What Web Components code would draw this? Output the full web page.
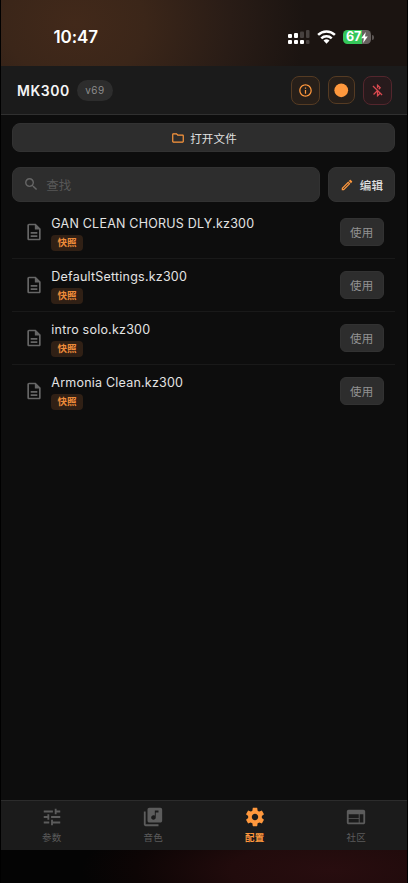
<!DOCTYPE html>
<html lang="zh-CN">
<head>
<meta charset="utf-8">
<title>MK300</title>
<style>
html, body { margin: 0; background: #000; }
body { font-family: Inter, "Noto Sans CJK SC", sans-serif; color: #e4e4e4; }
</style>
</head>
<body>
<mk-app></mk-app>
<script>
const define = (name, html) => {
  const t = document.createElement('template');
  t.innerHTML = html;
  customElements.define(name, class extends HTMLElement {
    constructor() {
      super();
      this.attachShadow({ mode: 'open' }).appendChild(t.content.cloneNode(true));
    }
  });
};

const ICONS = {
  info: 'M11 7h2v2h-2zm0 4h2v6h-2zm1-9C6.480 2 2 6.480 2 12s4.480 10 10 10 10-4.480 10-10S17.520 2 12 2zm0 18c-4.410 0-8-3.590-8-8s3.590-8 8-8 8 3.590 8 8-3.590 8-8 8z',
  dot: 'M12 2a10 10 0 1 0 0 20 10 10 0 0 0 0-20z',
  btoff: 'M13 5.830l1.880 1.880-1.600 1.600 1.410 1.410 3.020-3.020L12 2h-1v5.030l2 2v-3.200zM5.410 4L4 5.410 10.590 12 5 17.590 6.410 19 11 14.410V22h1l4.290-4.290 2.300 2.290L20 18.590 5.410 4zM13 18.170v-3.760l1.880 1.880L13 18.170z',
  folder: 'M9.170 6l2 2H20v10H4V6h5.170M10 4H4c-1.100 0-1.990.9-1.990 2L2 18c0 1.100.9 2 2 2h16c1.100 0 2-.9 2-2V8c0-1.100-.9-2-2-2h-8l-2-2z',
  search: 'M15.500 14h-.79l-.28-.27A6.471 6.471 0 0 0 16 9.500 6.500 6.500 0 1 0 9.500 16c1.610 0 3.090-.59 4.230-1.570l.27.28v.79l5 4.990L20.490 19l-4.990-5zm-6 0C7.010 14 5 11.990 5 9.500S7.010 5 9.500 5 14 7.010 14 9.500 11.990 14 9.500 14z',
  edit: 'M14.060 9.020l.92.92L5.920 19H5v-.92l9.060-9.060M17.660 3c-.25 0-.51.1-.7.290l-1.830 1.830 3.750 3.750 1.830-1.830c.39-.39.39-1.020 0-1.410l-2.340-2.340c-.2-.2-.45-.29-.71-.29zm-3.600 3.190L3 17.250V21h3.750L17.810 9.940l-3.750-3.750z',
  file: 'M8 16h8v2H8zm0-4h8v2H8zm6-10H6c-1.100 0-2 .9-2 2v16c0 1.100.89 2 1.990 2H18c1.100 0 2-.9 2-2V8l-6-6zm4 18H6V4h7v5h5v11z',
  tune: 'M3 17v2h6v-2H3zM3 5v2h10V5H3zm10 16v-2h8v-2h-8v-2h-2v6h2zM7 9v2H3v2h4v2h2V9H7zm14 4v-2H11v2h10zm-6-4h2V7h4V5h-4V3h-2v6z',
  music: 'M20 2H8c-1.100 0-2 .9-2 2v12c0 1.100.9 2 2 2h12c1.100 0 2-.9 2-2V4c0-1.100-.9-2-2-2zm-2 5h-3v5.500c0 1.380-1.120 2.500-2.500 2.500S10 13.880 10 12.500s1.120-2.500 2.500-2.500c.57 0 1.080.19 1.500.51V5h4v2zM4 6H2v14c0 1.100.9 2 2 2h14v-2H4V6z',
  gear: 'M19.430 12.980c.04-.32.07-.64.07-.98s-.03-.66-.07-.98l2.110-1.650c.19-.15.24-.42.12-.64l-2-3.460c-.12-.22-.39-.3-.61-.22l-2.490 1c-.52-.4-1.080-.73-1.690-.98l-.38-2.650C14.460 2.180 14.250 2 14 2h-4c-.25 0-.46.18-.49.42l-.38 2.650c-.61.25-1.170.59-1.690.98l-2.490-1c-.23-.09-.49 0-.61.22l-2 3.460c-.13.22-.07.49.12.64l2.110 1.650c-.04.32-.07.65-.07.98s.03.66.07.98l-2.110 1.650c-.19.15-.24.42-.12.64l2 3.460c.12.22.39.3.61.22l2.490-1c.52.4 1.080.73 1.690.98l.38 2.650c.03.24.24.42.49.42h4c.25 0 .46-.18.49-.42l.38-2.650c.61-.25 1.170-.59 1.690-.98l2.490 1c.23.09.49 0 .61-.22l2-3.460c.12-.22.07-.49-.12-.64l-2.110-1.650zM12 15.500c-1.930 0-3.500-1.570-3.500-3.500s1.570-3.500 3.500-3.500 3.500 1.570 3.500 3.500-1.570 3.500-3.500 3.500z',
  web: 'M20 4H4c-1.100 0-1.990.9-1.990 2L2 18c0 1.100.9 2 2 2h16c1.100 0 2-.9 2-2V6c0-1.100-.9-2-2-2zm-5 14H4v-4h11v4zm0-5H4V9h11v4zm5 5h-4V9h4v9z'
};
customElements.define('mk-icon', class extends HTMLElement {
  connectedCallback() {
    if (this.shadowRoot) return;
    const s = this.getAttribute('size');
    this.attachShadow({ mode: 'open' }).innerHTML =
      `<style>:host{display:block;flex:none;width:${s}px;height:${s}px}svg{display:block;width:100%;height:100%;fill:currentColor}</style>
       <svg viewBox="0 0 24 24"><path d="${ICONS[this.getAttribute('name')]}"/></svg>`;
  }
});

define('mk-status', `
<style>
:host{display:flex;box-sizing:border-box;height:66px;padding:8px 33.500px 0 52.500px;align-items:center;justify-content:space-between;
 background:radial-gradient(ellipse 200px 160px at 74px 24px,#42291a 0%,#3b2619 35%,#291c16 78%,#1b1411 115%)}
.time{font-size:17px;font-weight:600;color:#fff;letter-spacing:-.1px}
.r{display:flex;align-items:center}
svg{display:block}
.sig{margin-right:7px}.wifi{margin-right:7px}
.bat{display:flex;align-items:center;justify-content:center;width:28px;height:14.500px;border-radius:4.500px;
 background:linear-gradient(90deg,#35c759 0 67%,#66605e 67%);color:#fff;font-size:12.500px;font-weight:700;letter-spacing:-.3px;line-height:14px}
.cap{width:1.500px;height:5px;margin-left:1px;border-radius:0 2px 2px 0;background:#5c5654}
</style>
<div class="time">10:47</div>
<div class="r">
<svg class="sig" width="22" height="16" viewBox="0 0 22 16"><g fill="#fff"><rect x="0" y="5" width="4" height="4" rx="1"/><rect x="6" y="4" width="4" height="5" rx="1"/><rect x="0" y="11" width="4" height="4" rx="1"/><rect x="6" y="11" width="4" height="4" rx="1"/><rect x="12" y="11" width="4" height="4" rx="1"/></g><g fill="#47413f"><rect x="12" y="2.500" width="4" height="6.500" rx="1"/><rect x="18" y="1" width="3.500" height="8" rx="1"/><rect x="18" y="11" width="3.500" height="4" rx="1"/></g></svg>
<svg class="wifi" width="19" height="14" viewBox="0 0 19 14"><g fill="none" stroke="#fff" stroke-width="2.500"><path d="M1.100 4.900a12 12 0 0 1 16.800 0"/><path d="M4.300 8.300a7.400 7.400 0 0 1 10.400 0"/></g><path fill="#fff" d="M6.500 10.600a4.300 4.300 0 0 1 6 0L9.500 13.700z"/></svg>
<div class="bat"><span>67</span><svg width="7" height="11" viewBox="0 0 7 11"><path fill="#fff" d="M4.800 0L.2 6.200h2.700L2.100 11l4.700-6.400H4z"/></svg></div><div class="cap"></div>
</div>`);

define('mk-chip-button', `
<style>
:host{display:flex;box-sizing:border-box;width:29px;height:29px;border-radius:8px;align-items:center;justify-content:center;
 border:1px solid #553b23;background:#271f19;color:#ff983d}
:host([small]){width:27px;height:28px}
:host([tone=red]){border-color:#54262d;background:#271a1c;color:#dc4a50}
</style><slot></slot>`);

define('mk-header', `
<style>
:host{display:flex;box-sizing:border-box;height:49px;padding:0 15px 0 16px;align-items:center;background:#1b1b1b;border-bottom:1px solid #303030}
.t{font-size:14px;font-weight:600;color:#f4f4f4;letter-spacing:.5px;width:60px;white-space:nowrap}
.v{box-sizing:border-box;width:36px;height:21px;border-radius:11px;background:#2d2d2d;color:#8c8c8c;font-size:10px;letter-spacing:.5px;line-height:21px;text-align:center}
.r{display:flex;align-items:center;gap:8px;margin-left:auto}
</style>
<div class="t">MK300</div><div class="v">v69</div>
<div class="r">
<mk-chip-button><mk-icon name="info" size="15"></mk-icon></mk-chip-button>
<mk-chip-button small><mk-icon name="dot" size="16.500"></mk-icon></mk-chip-button>
<mk-chip-button tone="red"><mk-icon name="btoff" size="15"></mk-icon></mk-chip-button>
</div>`);

define('mk-button', `
<style>
:host{display:flex;box-sizing:border-box;align-items:center;justify-content:center;gap:5.500px;background:#2d2d2d;border:1px solid #323232;border-radius:8px;
 height:29px;font-size:11.500px;letter-spacing:.2px;color:#e0e0e0}
:host([kind=edit]){width:67.500px;height:35px;font-weight:500;gap:6px}
:host([kind=use]){width:44px;height:28px;border-radius:6px;color:#929292;letter-spacing:.3px;flex:none}
mk-icon{color:#ff983d}
</style><slot name="icon"></slot><slot></slot>`);

define('mk-search', `
<style>
:host{display:flex;box-sizing:border-box;flex:1;height:35px;align-items:center;gap:6.500px;padding-left:10px;background:#2d2d2d;border:1px solid #323232;border-radius:8px;font-size:12.500px;color:#585858}
mk-icon{color:#666}
</style><mk-icon name="search" size="16.500"></mk-icon><slot></slot>`);

define('mk-file-row', `
<style>
:host{display:flex;box-sizing:border-box;height:53.150px;align-items:center;padding:0 11.500px 0 11.300px;border-bottom:1px solid #191919}
:host([last]){border-bottom-color:transparent}
mk-icon{color:#666;margin-right:7.700px}
.m{flex:1;display:flex;flex-direction:column;align-items:flex-start;gap:3px;padding-top:1.500px}
.n{font-size:12.500px;line-height:17px;letter-spacing:.22px;color:#e3e3e3;white-space:nowrap}
.b{box-sizing:border-box;width:31.500px;height:15.500px;border-radius:4px;background:#302015;color:#ed8b3a;font-size:9.500px;font-weight:700;line-height:15.500px;text-align:center}
</style>
<mk-icon name="file" size="20"></mk-icon>
<div class="m"><div class="n"><slot></slot></div><div class="b">快照</div></div>
<mk-button kind="use">使用</mk-button>`);

define('mk-tab', `
<style>
:host{display:flex;flex:1;flex-direction:column;align-items:center;color:#5c5c5c;font-size:9.500px;letter-spacing:.2px;line-height:14px;gap:3px}
:host([active]){color:#ff983d;font-weight:700}
</style><slot name="icon"></slot><div><slot></slot></div>`);

define('mk-tabbar', `
<style>:host{display:flex;box-sizing:border-box;height:50px;padding-top:5px;background:#1b1b1b;border-top:1px solid #2c2c2c}</style>
<mk-tab><mk-icon slot="icon" name="tune" size="22"></mk-icon>参数</mk-tab>
<mk-tab><mk-icon slot="icon" name="music" size="22"></mk-icon>音色</mk-tab>
<mk-tab active><mk-icon slot="icon" name="gear" size="22"></mk-icon>配置</mk-tab>
<mk-tab><mk-icon slot="icon" name="web" size="22"></mk-icon>社区</mk-tab>`);

define('mk-app', `
<style>
:host{display:flex;flex-direction:column;box-sizing:border-box;width:408px;height:883px;padding:0 1px;background:#000;overflow:hidden}
main{flex:1;background:#0d0d0d;padding:8px 11.700px 0 11.300px}
.s{display:flex;gap:7.500px;margin:15px 0 4px}
.o{color:#ff983d}
.home{height:33px;background:radial-gradient(ellipse 250px 70px at 330px 20px,#280d0f 0%,#210b0c 40%,#0d0505 78%,#040404 100%)}
</style>
<mk-status></mk-status>
<mk-header></mk-header>
<main>
<mk-button><mk-icon class="o" slot="icon" name="folder" size="14"></mk-icon>打开文件</mk-button>
<div class="s"><mk-search>查找</mk-search><mk-button kind="edit"><mk-icon class="o" slot="icon" name="edit" size="14"></mk-icon>编辑</mk-button></div>
<mk-file-row>GAN CLEAN CHORUS DLY.kz300</mk-file-row>
<mk-file-row>DefaultSettings.kz300</mk-file-row>
<mk-file-row>intro solo.kz300</mk-file-row>
<mk-file-row last>Armonia Clean.kz300</mk-file-row>
</main>
<mk-tabbar></mk-tabbar>
<div class="home"></div>`);
</script>
</body>
</html>
